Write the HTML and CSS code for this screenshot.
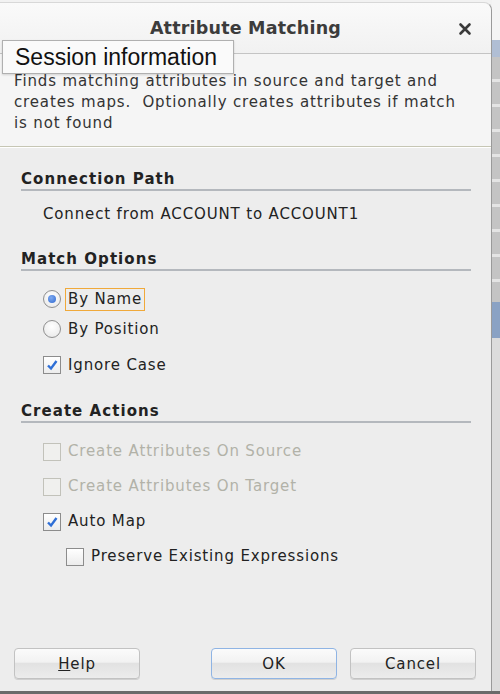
FILE: index.html
```html
<!DOCTYPE html>
<html>
<head>
<meta charset="utf-8">
<link rel="stylesheet" href="styles.css">
</head>
<body>
<div class="screen">
  <div class="dialog">
    <div class="titlebar">
      <span class="title">Attribute Matching</span>
      <span class="close">
        <svg width="14" height="14" viewBox="0 0 14 14"><path d="M2.5 2.5 L11.5 11.5 M11.5 2.5 L2.5 11.5" stroke="#3a3a3a" stroke-width="2.6" stroke-linecap="round"/></svg>
      </span>
    </div>
    <div class="desc">
      Finds matching attributes in source and target and<br>creates maps.&nbsp; Optionally creates attributes if match<br>is not found
    </div>
    <div class="content">
      <div class="section s1">
        <div class="heading">Connection Path</div>
        <div class="row first">Connect from ACCOUNT to ACCOUNT1</div>
      </div>
      <div class="section s2">
        <div class="heading">Match Options</div>
        <div class="row first"><span class="radio on"></span><span class="label focus">By Name</span></div>
        <div class="row"><span class="radio"></span><span class="label">By Position</span></div>
        <div class="row spaced"><span class="check on"><svg width="14" height="14" viewBox="0 0 14 14"><path d="M3 7.5 L6 10.5 L11.5 3" fill="none" stroke="#2f6fd6" stroke-width="2.4"/></svg></span><span class="label">Ignore Case</span></div>
      </div>
      <div class="section s3">
        <div class="heading">Create Actions</div>
        <div class="row tall first disabled"><span class="check"></span><span class="label">Create Attributes On Source</span></div>
        <div class="row tall disabled"><span class="check"></span><span class="label">Create Attributes On Target</span></div>
        <div class="row tall"><span class="check on"><svg width="14" height="14" viewBox="0 0 14 14"><path d="M3 7.5 L6 10.5 L11.5 3" fill="none" stroke="#2f6fd6" stroke-width="2.4"/></svg></span><span class="label">Auto Map</span></div>
        <div class="row tall indent"><span class="check"></span><span class="label">Preserve Existing Expressions</span></div>
      </div>
    </div>
    <div class="buttons">
      <button class="btn"><u>H</u>elp</button>
      <div class="right-btns">
        <button class="btn default">OK</button>
        <button class="btn">Cancel</button>
      </div>
    </div>
  </div>
  <div class="backdrop">
    <div class="bd-top"></div>
    <div class="bd-blue"></div>
    <div class="bd-circles"></div>
    <div class="bd-sel"></div>
    <div class="bd-rest"></div>
  </div>
  <div class="tooltip">Session information</div>
</div>
</body>
</html>
```
FILE: styles.css
```css
* { box-sizing: border-box; }
html, body { margin: 0; padding: 0; }
body {
  width: 500px;
  height: 694px;
  overflow: hidden;
  font-family: "DejaVu Sans", sans-serif;
  background: #6a6a6a;
}
.screen {
  position: relative;
  display: flex;
  width: 500px;
  height: 691px;
  background: #f2f2f2;
}
.dialog {
  width: 492px;
  height: 689px;
  display: flex;
  flex-direction: column;
  background: #ededed;
  border-top-right-radius: 8px;
  border-right: 1px solid #9a9a9a;
  border-top: 1px solid #d8d8d8;
  margin-top: 2px;
}
.titlebar {
  height: 51px;
  flex: none;
  display: flex;
  align-items: center;
  justify-content: center;
  position: relative;
  background: linear-gradient(#fafafa, #f1f1f1);
  border-top-right-radius: 8px;
  border-bottom: 1px solid #c4c4c4;
}
.title {
  font-weight: bold;
  font-size: 17.5px;
  color: #3c3c3c;
  letter-spacing: 0.2px;
}
.close {
  position: absolute;
  right: 19px;
  top: 19px;
  width: 14px;
  height: 14px;
  display: flex;
}
.desc {
  height: 93px;
  flex: none;
  background: #f5f5f5;
  padding: 17px 14px 0 14px;
  font-size: 15px;
  line-height: 21px;
  letter-spacing: 0.85px;
  color: #333;
  border-bottom: 1px solid #c6c6b4;
  box-shadow: 0 1px 0 #ffffff;
}
.content {
  flex: 1;
  padding: 23px 21px 0 21px;
  display: flex;
  flex-direction: column;
}
.section { display: flex; flex-direction: column; }
.s2 { margin-top: 21px; }
.s3 { margin-top: 22px; }
.heading {
  font-weight: bold;
  font-size: 15px;
  letter-spacing: 1.05px;
  color: #222;
  width: 450px;
  height: 21px;
  padding-bottom: 1px;
  border-bottom: 2px solid #b4b8bd;
  line-height: 18px;
}
.row {
  display: flex;
  align-items: center;
  height: 30px;
  padding-left: 22px;
  font-size: 15px;
  letter-spacing: 0.85px;
  color: #222;
}
.s1 .row.first { margin-top: 8px; }
.s2 .row.first { margin-top: 13px; }
.row.spaced { margin-top: 6px; }
.row.tall { height: 35px; }
.s3 .row.first { margin-top: 11px; }
.row.indent { padding-left: 45px; }
.label { margin-left: 4px; line-height: 19px; padding: 1px 2px; border: 1px solid transparent; }
.label.focus { border-color: #f0a93a; }
.disabled .label { color: #b2b2a8; }
.radio {
  width: 18px; height: 18px;
  border-radius: 50%;
  border: 1px solid #8f8f8f;
  background: radial-gradient(circle at 50% 35%, #ffffff, #e6e6e6);
  display: flex; align-items: center; justify-content: center;
  flex: none;
}
.radio.on::after {
  content: "";
  width: 8px; height: 8px; border-radius: 50%;
  background: radial-gradient(circle at 40% 35%, #7eaaf0, #2f68d0);
}
.check {
  width: 18px; height: 18px;
  border: 1px solid #8c8c8c;
  background: linear-gradient(#ffffff, #ececec);
  display: flex; align-items: center; justify-content: center;
  flex: none;
}
.disabled .check { border-color: #c2c2ba; background: #f0f0ee; }
.buttons {
  flex: none;
  height: 43px;
  display: flex;
  justify-content: space-between;
  padding: 0 15px 0 14px;
}
.right-btns { display: flex; gap: 13px; }
.btn {
  width: 126px;
  height: 31px;
  font-family: "DejaVu Sans", sans-serif;
  font-size: 15px;
  letter-spacing: 0.85px;
  color: #222;
  border: 1px solid #c2c2c2;
  border-radius: 4px;
  background: linear-gradient(#fbfbfb 0%, #f2f2f2 45%, #e2e2e2 50%, #ececec 100%);
  box-shadow: 0 1px 0 #d0d0d0;
  padding: 0;
}
.btn.default { border-color: #8fb4e4; }
.backdrop {
  width: 8px;
  display: flex;
  flex-direction: column;
  background: #d6d6d6;
}
.bd-top { height: 40px; background: #f4f4f4; }
.bd-blue { height: 17px; background: #b0bed4; }
.bd-circles { height: 245px; background: repeating-linear-gradient(#c4c4c4 0 22px, #e4e4e4 22px 25px); }
.bd-sel { height: 36px; background: #8aa2c4; }
.bd-rest { flex: 1; background: #dcdcdc; }
.tooltip {
  position: absolute;
  left: 2px;
  top: 40px;
  width: 232px;
  height: 34px;
  background: #fafafa;
  border: 1px solid #b0b0b0;
  font-family: "Liberation Sans", sans-serif;
  font-size: 23px;
  color: #111;
  padding: 3px 0 0 12px;
  box-shadow: 0 1px 2px rgba(0,0,0,0.15);
}
```
